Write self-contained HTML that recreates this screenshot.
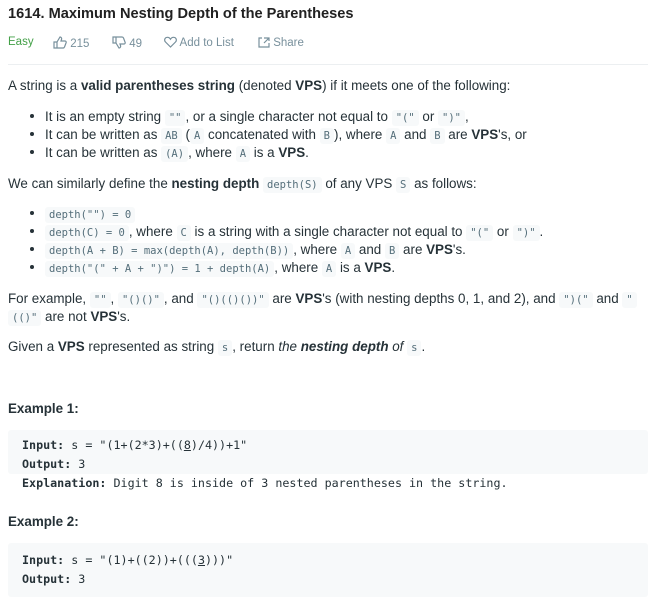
<!DOCTYPE html>
<html><head><meta charset="utf-8"><style>
body{margin:0;width:664px;height:604px;overflow:hidden;background:#fff;font-family:"Liberation Sans",sans-serif;color:#263238;font-size:13.4px;position:relative}
.a{position:absolute;left:8px;white-space:nowrap;line-height:18px}
code{font-family:"DejaVu Sans Mono",monospace;font-size:10.5px;background:#f7f9fa;color:#546e7a;padding:2px 4px;border-radius:3px}
b{font-weight:bold}
.dot{display:inline-block;width:4px;height:4px;border-radius:50%;background:#263238;margin:0 11px 3px 22px;vertical-align:middle}
.box{position:absolute;left:8px;width:640px;background:#f7f9fa;border-radius:3px}
.box div{position:absolute;left:14px;font-family:"DejaVu Sans Mono",monospace;font-size:11.7px;color:#263238;white-space:nowrap}
.meta{position:absolute;top:36px;font-size:11.5px;color:#78909c;white-space:nowrap}
</style></head><body>
<div class="a" style="top:5px;font-size:14.6px;font-weight:bold;color:#212121">1614. Maximum Nesting Depth of the Parentheses</div>
<div class="meta" style="left:8px;color:#43a047">Easy</div>
<div class="meta" style="left:53px"><svg width="14" height="13" viewBox="0 0 14 13" style="vertical-align:-2px"><path d="M1 6h3v6H1zM4 6l3-5c1 0 2 1 1.5 2.5L8 5h4c1 0 1.5 1 1 2l-1.5 4c-.3.7-1 1-1.5 1H4" fill="none" stroke="#78909c" stroke-width="1.2"/></svg> 215</div>
<div class="meta" style="left:112px"><svg width="14" height="13" viewBox="0 0 14 13" style="vertical-align:-2px"><path d="M1 1h3v6H1zM4 7l3 5c1 0 2-1 1.5-2.5L8 8h4c1 0 1.5-1 1-2l-1.5-4c-.3-.7-1-1-1.5-1H4" fill="none" stroke="#78909c" stroke-width="1.2"/></svg> 49</div>
<div class="meta" style="left:164px"><svg width="13" height="12" viewBox="0 0 13 12" style="vertical-align:-2px"><path d="M6.5 11L1.5 6C0 4.5.5 1.5 3.3 1.3c1.5-.1 2.6.9 3.2 1.900.6-1 1.7-2 3.2-1.9C12.5 1.5 13 4.5 11.5 6z" fill="none" stroke="#78909c" stroke-width="1.2"/></svg> Add to List</div>
<div class="meta" style="left:258px"><svg width="12" height="12" viewBox="0 0 12 12" style="vertical-align:-2px"><path d="M4 2H1v9h10V7M6 2h5v3M11 2L6 7" fill="none" stroke="#78909c" stroke-width="1.2"/></svg> Share</div>
<div style="position:absolute;left:8px;top:64px;width:640px;height:1px;background:#eceff1"></div>

<div class="a" style="top:77px">A string is a <b>valid parentheses string</b> (denoted <b>VPS</b>) if it meets one of the following:</div>
<div class="a" style="top:108px"><span class="dot"></span>It is an empty string <code>""</code>, or a single character not equal to <code>"("</code> or <code>")"</code>,</div>
<div class="a" style="top:126px"><span class="dot"></span>It can be written as <code>AB</code> (<code>A</code> concatenated with <code>B</code>), where <code>A</code> and <code>B</code> are <b>VPS</b>'s, or</div>
<div class="a" style="top:144px"><span class="dot"></span>It can be written as <code>(A)</code>, where <code>A</code> is a <b>VPS</b>.</div>
<div class="a" style="top:175px">We can similarly define the <b>nesting depth</b> <code>depth(S)</code> of any VPS <code>S</code> as follows:</div>
<div class="a" style="top:205px"><span class="dot"></span><code>depth("") = 0</code></div>
<div class="a" style="top:223px"><span class="dot"></span><code>depth(C) = 0</code>, where <code>C</code> is a string with a single character not equal to <code>"("</code> or <code>")"</code>.</div>
<div class="a" style="top:241px"><span class="dot"></span><code>depth(A + B) = max(depth(A), depth(B))</code>, where <code>A</code> and <code>B</code> are <b>VPS</b>'s.</div>
<div class="a" style="top:259px"><span class="dot"></span><code>depth("(" + A + ")") = 1 + depth(A)</code>, where <code>A</code> is a <b>VPS</b>.</div>
<div class="a" style="top:290px">For example, <code>""</code>, <code>"()()"</code>, and <code>"()(()())"</code> are <b>VPS</b>'s (with nesting depths 0, 1, and 2), and <code>")("</code> and <code>"</code></div>
<div class="a" style="top:308px"><code>(()"</code> are not <b>VPS</b>'s.</div>
<div class="a" style="top:338px">Given a <b>VPS</b> represented as string <code>s</code>, return <i>the <b>nesting depth</b> of</i> <code>s</code>.</div>

<div class="a" style="top:400px;font-weight:bold">Example 1:</div>
<div class="box" style="top:430px;height:44px">
<div style="top:8px"><b>Input:</b> s = "(1+(2*3)+((<u>8</u>)/4))+1"</div>
<div style="top:27px"><b>Output:</b> 3</div>
<div style="top:46px"><b>Explanation:</b> Digit 8 is inside of 3 nested parentheses in the string.</div>
</div>
<div class="a" style="top:513px;font-weight:bold">Example 2:</div>
<div class="box" style="top:543px;height:54px">
<div style="top:10px"><b>Input:</b> s = "(1)+((2))+(((<u>3</u>)))"</div>
<div style="top:29px"><b>Output:</b> 3</div>
</div>
</body></html>
